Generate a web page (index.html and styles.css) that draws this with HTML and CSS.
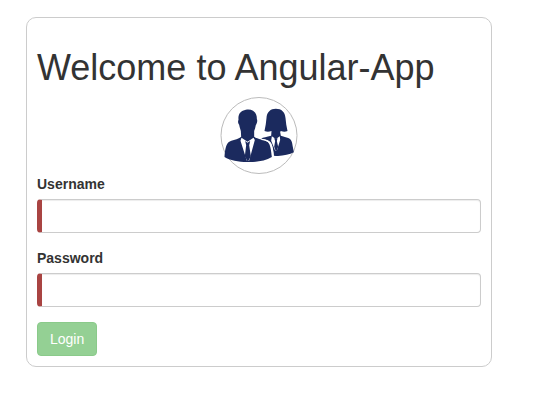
FILE: index.html
```html
<!DOCTYPE html>
<html lang="en">
<head>
<meta charset="utf-8">
<meta name="viewport" content="width=device-width, initial-scale=1">
<title>Angular-App</title>
<link rel="stylesheet" href="styles.css">
</head>
<body>
<main class="login-card">
  <h1 class="title">Welcome to Angular-App</h1>
  <svg class="avatar" viewBox="15 15 231 231" aria-hidden="true">
    <circle class="avatar-ring" cx="130.500" cy="130.500" r="114"/>
    <!-- woman -->
    <path class="figure" d="M147 117 C150 104 152 91 153 78 C154 60 165 50 181 50 C198 50 209 60 210 78 C211 91 213 104 216 117 Q207 121 196 117 L194 120 L196 131 L218 138 C228 142 230 150 231 160 L235 181 C220 189 195 194 175 191 C174 177 172 162 166 153 C160 144 150 142 137 140 C142 136 154 134 167 131 L168 117 Q157 121 147 117 Z"/>
    <path class="shirt" d="M169 133 L181 141 L193 133 L194 144 L184 176 L179 176 L167 146 Z"/>
    <path class="figure" d="M176 139 L186 139 L184 147 L188 164 L182 181 L176 164 L179 147 Z"/>
    <!-- man -->
    <path class="figure" d="M76 117 C74 109 72 104 71 98 C67 94 67 87 69 83 C67 65 76 56 91 53 C112 49 125 62 124 81 C127 86 124 95 121 99 C120 106 118 112 116 117 L116 134 C126 142 148 142 157 150 C165 158 167 177 169 195 C149 207 121 211 95 210 C69 210 43 205 27 195 C28 180 30 159 39 151 C49 143 67 143 77 134 Z"/>
    <path class="shirt" d="M78 137 L96 149 L114 137 L118 144 L101 206 L94 206 L75 146 Z"/>
    <path class="figure" d="M89 147 L96 152 L104 147 L101 160 L106 193 L97 209 L88 193 L92 160 Z"/>
    <path class="seam" d="M138 142 C153 144 161 147 165 154 C170 163 171 177 173 195"/>
  </svg>
  <form>
    <div class="form-group">
      <label for="username">Username</label>
      <input id="username" class="form-control" type="text" autocomplete="off">
    </div>
    <div class="form-group">
      <label for="password">Password</label>
      <input id="password" class="form-control" type="password" autocomplete="off">
    </div>
    <button class="login-button" type="submit" disabled>Login</button>
  </form>
</main>
</body>
</html>
```

FILE: styles.css
```css
* {
  box-sizing: border-box;
}

body {
  margin: 0;
  background: #fff;
  color: #333;
  font: 14px/20px "Liberation Sans", Arial, sans-serif;
}

.login-card {
  margin: 17px 45px 0 26px;
  padding: 10px;
  border: 1px solid #ccc;
  border-radius: 10px;
}

.title {
  margin: 20px 0 10px;
  font-size: 36px;
  font-weight: 400;
  line-height: 39px;
}

.avatar {
  display: block;
  width: 78px;
  height: 77px;
  margin: 0 auto;
}

.avatar-ring {
  fill: #fff;
  stroke: #bbb;
  stroke-width: 3;
}

.figure {
  fill: #1b2a5e;
}

.shirt {
  fill: #fff;
}

.seam {
  fill: none;
  stroke: #fff;
  stroke-width: 4;
}

.form-group {
  margin-bottom: 15px;
}

.form-group label {
  display: block;
  margin-bottom: 5px;
  font-weight: 700;
}

.form-control {
  display: block;
  width: 100%;
  height: 34px;
  padding: 6px 12px;
  border: 1px solid #ccc;
  border-left: 5px solid #a94442;
  border-radius: 4px;
  background: #fff;
  box-shadow: inset 0 1px 1px rgba(0, 0, 0, 0.075);
  color: #555;
  font: inherit;
}

.login-button {
  display: block;
  padding: 6px 12px;
  border: 1px solid #4cae4c;
  border-radius: 4px;
  background: #5cb85c;
  color: #fff;
  font: inherit;
  opacity: 0.65;
}
```
